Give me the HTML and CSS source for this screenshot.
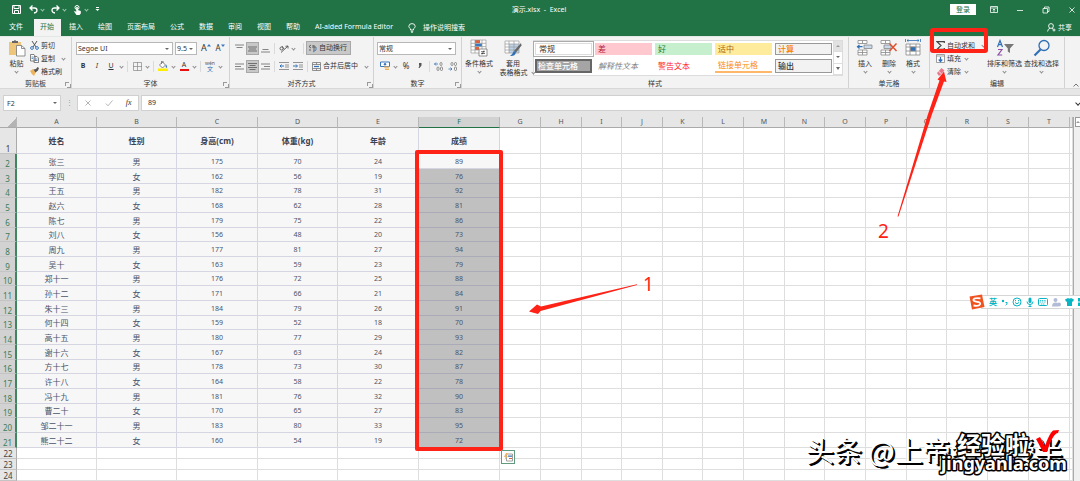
FILE: index.html
```
<!DOCTYPE html>
<html lang="zh-CN">
<head>
<meta charset="utf-8">
<title>演示.xlsx - Excel</title>
<link rel="stylesheet" href="styles.css">
</head>
<body>
<header class="titlebar">
  <div class="quick">
    <button class="qbtn" aria-label="保存"><svg width="9" height="9" viewBox="0 0 9 9" fill="none" stroke="#fff"><path d="M.5 .5h8v8h-8zM2 .5v3h5v-3M2.500 8.500v-3h4v3"/></svg></button>
    <button class="qbtn wide" aria-label="撤消"><svg width="9" height="9" viewBox="0 0 9 9" fill="none" stroke="#fff" stroke-width="1.300"><path d="M3.500 .5L1 3l2.500 2.500M1 3h4.500q2.500 0 2.500 2.300T5 8"/></svg><i class="chev"></i></button>
    <button class="qbtn wide" aria-label="恢复"><svg width="9" height="9" viewBox="0 0 9 9" fill="none" stroke="#fff" stroke-width="1.300"><path d="M5.500 .5L8 3 5.500 5.500M8 3H3.500Q1 3 1 5.300T4 8"/></svg><i class="chev"></i></button>
    <button class="qbtn wide" aria-label="触摸模式"><svg width="9" height="10" viewBox="0 0 9 10"><circle cx="4" cy="2.500" r="2" fill="none" stroke="#fff"/><path d="M3.200 2h1.600v3l3 1v2.500L6.500 10h-3L1 6.500l1-.6 1.200 1z" fill="#fff"/></svg><i class="chev"></i></button>
    <button class="qbtn" aria-label="自定义快速访问工具栏"><svg width="5" height="5" viewBox="0 0 5 5"><path d="M1 0h3v1H1zM.5 2h4l-2 2z" fill="#fff"/></svg></button>
  </div>
  <h1 class="doc">演示.xlsx&nbsp; -&nbsp; Excel</h1>
  <div class="window">
    <button class="login">登录</button>
    <button aria-label="功能区显示选项"><svg width="8" height="8" viewBox="0 0 8 8" fill="none" stroke="#fff"><path d="M.5 .5h7v6h-7zM.5 2h7M4 6V3M2.800 4.200L4 3l1.200 1.200" stroke-width=".8"/></svg></button>
    <button aria-label="最小化"><svg width="8" height="8" viewBox="0 0 8 8" stroke="#fff"><path d="M1 4.500h6" stroke-width=".8"/></svg></button>
    <button aria-label="还原"><svg width="8" height="8" viewBox="0 0 8 8" fill="none" stroke="#fff" stroke-width=".8"><path d="M1 2.500h4.500V7H1zM2.500 2.500V1H7v4.500H5.500"/></svg></button>
    <button aria-label="关闭"><svg width="8" height="8" viewBox="0 0 8 8" stroke="#fff" stroke-width=".8"><path d="M1.500 1.500l5 5M6.500 1.500l-5 5"/></svg></button>
  </div>
</header>

<nav class="tabs">
  <a href="#" class="file">文件</a>
  <a href="#" class="active">开始</a>
  <a href="#">插入</a>
  <a href="#">绘图</a>
  <a href="#">页面布局</a>
  <a href="#">公式</a>
  <a href="#">数据</a>
  <a href="#">审阅</a>
  <a href="#">视图</a>
  <a href="#">帮助</a>
  <a href="#" class="latin">AI-aided Formula Editor</a>
  <a href="#" class="tell"><svg width="8" height="10" viewBox="0 0 8 10" fill="none" stroke="#fff" stroke-width=".9"><path d="M2.500 7V5.800Q.8 4.800 .8 3.300 1 .6 4 .6t3.200 2.700Q7.200 4.800 5.500 5.800V7zM2.800 8.300h2.400M3.300 9.500h1.400"/></svg>操作说明搜索</a>
  <a href="#" class="share"><svg width="9" height="9" viewBox="0 0 9 9" fill="none" stroke="#fff" stroke-width=".9"><circle cx="4" cy="3" r="2.400"/><path d="M.6 8.500Q.8 5.800 3 5.300M5 5.300l1 .7M5.500 7h3M7 5.500v3"/></svg>共享</a>
</nav>

<section class="ribbon">
  <div class="group clip">
    <div class="body">
      <button class="big"><svg width="18" height="18" viewBox="0 0 18 18"><path d="M1 3h12v13H1z" fill="#edc67c"/><path d="M4 4V2h2q1-2 2 0h2v2z" fill="#666"/><path d="M8.500 6.500h5l3.500 3V17H8.500z" fill="#fff" stroke="#777" stroke-width=".8"/><path d="M13.500 6.500v3H17" fill="none" stroke="#777" stroke-width=".8"/></svg><span>粘贴</span><i class="chev"></i></button>
      <div class="stack">
        <button class="item"><svg width="9" height="9" viewBox="0 0 9 9" fill="none"><path d="M2 0l4 6M7 0L3 6" stroke="#555"/><circle cx="2" cy="7" r="1.400" stroke="#3b78bd"/><circle cx="7" cy="7" r="1.400" stroke="#3b78bd"/></svg>剪切</button>
        <button class="item"><svg width="9" height="9" viewBox="0 0 9 9" fill="#fff" stroke="#666" stroke-width=".8"><path d="M.5 .5H4L5 2v5H.5zM4 2.500h3l1.500 1.500v4.500H4z"/><path d="M5 5h2.500M5 6.500h2.500M1.500 3H3M1.500 4.500H3" stroke="#3b78bd"/></svg>复制<i class="chev"></i></button>
        <button class="item"><svg width="9" height="9" viewBox="0 0 9 9"><path d="M0 4l3-2 3 3-2 4q-2-1-4-5z" fill="#edb45f"/><path d="M3.500 2.500l2 3L8 3.500 9 1 7.500 0 6 2z" fill="#555"/></svg>格式刷</button>
      </div>
    </div>
    <h2>剪贴板</h2><i class="launch"></i>
  </div>

  <div class="group font">
    <div class="body rows">
      <div class="line">
        <label class="combo c97"><select aria-label="字体"><option>Segoe UI</option></select></label>
        <label class="combo c22"><select aria-label="字号"><option>9.5</option></select></label>
        <button class="tool w14 letter" aria-label="增大字号">A<svg width="4" height="8" viewBox="0 0 4 8"><path d="M0 2.500L2 0l2 2.500z" fill="#3b78bd"/></svg></button>
        <button class="tool w14 letter small" aria-label="减小字号">A<svg width="4" height="8" viewBox="0 0 4 8"><path d="M0 .5h4L2 3z" fill="#3b78bd"/></svg></button>
      </div>
      <div class="line">
        <button class="tool w14"><b>B</b></button>
        <button class="tool w14"><em>I</em></button>
        <button class="tool w14"><u>U</u></button><i class="chev c"></i>
        <span class="bar"></span>
        <button class="tool w14" aria-label="边框"><svg width="9" height="9" viewBox="0 0 9 9" fill="none" stroke="#888" stroke-width=".7"><path d="M.5 .5h8v8h-8zM4.500 0v9M0 4.500h9"/></svg></button><i class="chev c"></i>
        <span class="bar"></span>
        <button class="tool w14" aria-label="填充颜色"><svg width="10" height="10" viewBox="0 0 10 10"><path d="M1.500 4L4.500 1l3 3-3 3z" fill="#fff" stroke="#666" stroke-width=".8"/><path d="M3.500 3V0h1.500v2" fill="none" stroke="#666" stroke-width=".7"/><path d="M8 3.500q2 3 .5 3.200Q7 6.500 8 3.500" fill="#3b78bd"/><path d="M0 7.500h10v2.500H0z" fill="#ffee00"/></svg></button><i class="chev c"></i>
        <button class="tool w14 ink" aria-label="字体颜色"><span>A</span></button><i class="chev c"></i>
        <span class="bar"></span>
        <button class="tool w14" aria-label="拼音"><span class="pinyin"><small>wén</small><span>文</span></span></button><i class="chev c"></i>
      </div>
    </div>
    <h2>字体</h2><i class="launch"></i>
  </div>

  <div class="group align">
    <div class="body rows">
      <div class="line">
        <button class="tool w13" aria-label="顶端对齐"><svg width="9" height="9" viewBox="0 0 9 9" stroke="#777" stroke-width=".9"><path d="M0 1h9M1.500 3.500h6"/></svg></button>
        <button class="tool w13 on" aria-label="垂直居中"><svg width="9" height="9" viewBox="0 0 9 9" stroke="#666" stroke-width=".9"><path d="M0 3h9M1 5h7M0 7h9"/></svg></button>
        <button class="tool w13" aria-label="底端对齐"><svg width="9" height="9" viewBox="0 0 9 9" stroke="#777" stroke-width=".9"><path d="M1.500 5.500h6M0 8h9"/></svg></button>
        <span class="bar"></span>
        <button class="tool w13" aria-label="方向"><svg width="10" height="9" viewBox="0 0 10 9" fill="none" stroke="#555" stroke-width=".9"><path d="M2 8.500L9 2M9 2L6.500 2.300M9 2v2.500"/><circle cx="2.500" cy="4.500" r="1.500"/><path d="M3 2l2 3"/></svg></button><i class="chev c"></i>
        <span class="bar push"></span>
        <button class="item wrap on"><svg width="9" height="9" viewBox="0 0 9 9" fill="none" stroke="#555" stroke-width=".9"><path d="M3 1L1 2.500 3 4M1 6h2M5 1v3h2V2H5M5 6h2"/><path d="M8 3v3L5 8" stroke="#3b78bd"/></svg>自动换行</button>
      </div>
      <div class="line">
        <button class="tool w13" aria-label="左对齐"><svg width="9" height="9" viewBox="0 0 9 9" stroke="#777" stroke-width=".9"><path d="M0 2h9M0 4.500h6M0 7h9"/></svg></button>
        <button class="tool w13 on" aria-label="居中"><svg width="9" height="9" viewBox="0 0 9 9" stroke="#666" stroke-width=".9"><path d="M0 1.500h9M1.500 3.500h6M0 5.500h9M1.500 7.500h6"/></svg></button>
        <button class="tool w13" aria-label="右对齐"><svg width="9" height="9" viewBox="0 0 9 9" stroke="#777" stroke-width=".9"><path d="M0 2h9M3 4.500h6M0 7h9"/></svg></button>
        <span class="bar"></span>
        <button class="tool w14" aria-label="减少缩进"><svg width="10" height="8" viewBox="0 0 10 8" fill="none"><path d="M0 .5h10M6 3h4M6 5h4M0 7.500h10" stroke="#888" stroke-width=".9"/><path d="M5 4H1M2.500 2.500L1 4l1.500 1.500" stroke="#2f6fb5"/></svg></button>
        <button class="tool w14" aria-label="增加缩进"><svg width="10" height="8" viewBox="0 0 10 8" fill="none"><path d="M0 .5h10M6 3h4M6 5h4M0 7.500h10" stroke="#888" stroke-width=".9"/><path d="M0 4h4M3 2.500L4.500 4 3 5.500" stroke="#2f6fb5"/></svg></button>
        <span class="bar"></span>
        <button class="item wrap"><svg width="9" height="9" viewBox="0 0 9 9" fill="none" stroke="#777" stroke-width=".8"><path d="M.5 .5h8v8h-8zM.5 2.500h8M.5 6.500h8M4.500 .5v2M4.500 6.500v2"/><path d="M2 4.500h5" stroke="#2f6fb5" stroke-width="1.200"/></svg>合并后居中<i class="chev"></i></button>
      </div>
    </div>
    <h2>对齐方式</h2><i class="launch"></i>
  </div>

  <div class="group number">
    <div class="body rows">
      <div class="line"><label class="combo c79"><select aria-label="数字格式"><option>常规</option></select></label></div>
      <div class="line">
        <button class="tool w14" aria-label="会计数字格式"><svg width="10" height="10" viewBox="0 0 10 10"><path d="M.5 1h9v4.500h-9z" fill="#fff" stroke="#3b78bd"/><circle cx="5" cy="3.200" r="1.200" fill="#3b78bd"/><path d="M4 5.500h5v1.200H4zM5 7.500h4v1.500H5z" fill="#edb45f"/></svg></button><i class="chev c"></i>
        <button class="tool w14 pct">%</button>
        <button class="tool w14 comma" aria-label="千位分隔样式"><svg width="4" height="6" viewBox="0 0 4 6"><path d="M1 0h2.500v2.500L1.500 5H.5L1.500 2.500H1z" fill="#555"/></svg></button>
        <span class="bar"></span>
        <button class="tool w14" aria-label="增加小数位数"><svg width="10" height="9" viewBox="0 0 10 9" fill="none" stroke="#777" stroke-width=".8"><path d="M4 2H.5M2 .5L.5 2 2 3.500" stroke="#2f6fb5"/><rect x="6" y=".5" width="2" height="3" rx="1"/><rect x="3" y="5" width="2" height="3.500" rx="1"/><rect x="6.500" y="5" width="2" height="3.500" rx="1"/></svg></button>
        <button class="tool w14" aria-label="减少小数位数"><svg width="10" height="9" viewBox="0 0 10 9" fill="none" stroke="#777" stroke-width=".8"><path d="M.5 7H4M2.500 5.500L4 7 2.500 8.500" stroke="#2f6fb5"/><rect x="6.500" y="5" width="2" height="3.500" rx="1"/><rect x="3" y=".5" width="2" height="3" rx="1"/><rect x="6.500" y=".5" width="2" height="3" rx="1"/></svg></button>
      </div>
    </div>
    <h2>数字</h2><i class="launch"></i>
  </div>

  <div class="group styles">
    <div class="body">
      <button class="big w34"><svg width="18" height="18" viewBox="0 0 18 18"><path d="M1 1h15v13H1z" fill="#fff"/><path d="M5 1h5v3H5zM5 8h4v3H5z" fill="#e0603c"/><path d="M5 4.500h7v3H5z" fill="#3b78bd"/><path d="M1 1h15v13H1zM1 4.300h15M1 7.600h15M1 11h15M5 1v13M12 1v13" fill="none" stroke="#999" stroke-width=".7"/><path d="M9 10h8v7H9z" fill="#fff" stroke="#777" stroke-width=".8"/><path d="M11 12.700h4M11 14.500h4M14 11.500l-2 4" stroke="#333" stroke-width=".7"/></svg><span>条件格式</span><i class="chev"></i></button>
      <button class="big w34"><svg width="18" height="18" viewBox="0 0 18 18"><path d="M1 2h14v12H1z" fill="#fff"/><path d="M5 5h10v9H5z" fill="#bcd3ea"/><path d="M1 2h14v12H1zM1 5h14M1 8h14M1 11h14M5 2v12M10 2v12" fill="none" stroke="#999" stroke-width=".7"/><path d="M17 4l-7 8 2 1.500 5.500-7z" fill="#666"/><path d="M10 12l2 1.500q-1 4-6 3.500 2-1 4-5z" fill="#2f6fb5"/></svg><span>套用</span><span class="two">表格格式<i class="chev"></i></span></button>
      <div class="gallery">
        <div class="swatches">
          <button class="sw normal">常规</button><button class="sw bad">差</button><button class="sw good">好</button><button class="sw neutral">适中</button><button class="sw calc">计算</button>
          <button class="sw check">检查单元格</button><button class="sw explain">解释性文本</button><button class="sw warn">警告文本</button><button class="sw link">链接单元格</button><button class="sw out">输出</button>
        </div>
        <div class="spin"><button aria-label="上一行"><i class="tri up"></i></button><button aria-label="下一行"><i class="tri"></i></button><button aria-label="其他"><i class="tri more"></i></button></div>
      </div>
    </div>
    <h2>样式</h2>
  </div>

  <div class="group cells">
    <div class="body">
      <button class="big w24"><svg width="18" height="18" viewBox="0 0 18 18" fill="#fff" stroke="#888" stroke-width=".8"><path d="M2 1.500h9v3H2zM6.500 1.500v3M2 11h9v5H2zM6.500 11v5M2 13.500h9"/><path d="M8 6h8v3.500H8z" fill="#c9d9ea"/><path d="M6.500 7.700H1.500M3.500 6L1.500 7.700l2 1.800" fill="none" stroke="#2f6fb5" stroke-width="1.200"/></svg><span>插入</span><i class="chev"></i></button>
      <button class="big w24"><svg width="18" height="18" viewBox="0 0 18 18" fill="#fff" stroke="#888" stroke-width=".8"><path d="M1 1.500h9v3H1zM5.500 1.500v3M1 11h9v5H1zM5.500 11v5M1 13.500h9"/><path d="M4 6h7v3.500H4z" fill="#c9d9ea"/><path d="M9.500 4.500l7 7.500M16.500 4.500l-7 7.500" stroke="#e0502c" stroke-width="1.500"/></svg><span>删除</span><i class="chev"></i></button>
      <button class="big w24"><svg width="18" height="18" viewBox="0 0 18 18" fill="#fff" stroke="#888" stroke-width=".8"><path d="M2 5h14v11H2zM2 8h14M2 12h14M6 5v11M12 5v11"/><path d="M6.500 8h5v4h-5z" fill="#2f6fb5"/><path d="M3 1.500h12M4.500 .3L3 1.500l1.500 1.200M13.500 .3L15 1.500l-1.500 1.200M1.500 0v3M16.500 0v3" stroke="#2f6fb5" fill="none"/></svg><span>格式</span><i class="chev"></i></button>
    </div>
    <h2>单元格</h2>
  </div>

  <div class="group edit">
    <div class="body">
      <div class="stack">
        <button class="item sum"><svg width="9" height="9" viewBox="0 0 9 9" fill="none" stroke="#444" stroke-width="1.200"><path d="M8.300 2V.7H1L5 4.500 1 8.300h7.300V7"/></svg>自动求和<i class="chev"></i></button>
        <button class="item"><svg width="9" height="9" viewBox="0 0 9 9" fill="#fff" stroke="#888" stroke-width=".8"><path d="M.5 .5h8v8h-8zM.5 2h8"/><path d="M4.500 3v4.500M2.700 5.500l1.800 2 1.800-2" fill="none" stroke="#2f6fb5" stroke-width="1.200"/></svg>填充<i class="chev near"></i></button>
        <button class="item"><svg width="9" height="9" viewBox="0 0 9 9"><path d="M1 6l4.500-5L8.500 3.500 4 8.500H2.500z" fill="#e8788c"/><path d="M2.500 4.200l3 2.700" stroke="#fff" stroke-width=".8"/></svg>清除<i class="chev near"></i></button>
      </div>
      <button class="big w37"><svg width="18" height="18" viewBox="0 0 18 18"><path d="M1.500 8L4 1.500 6.500 8M2.500 5.700h3" fill="none" stroke="#2f6fb5" stroke-width="1.200"/><path d="M2 10.500h4L2 16h4.200" fill="none" stroke="#8d4fa8" stroke-width="1.200"/><path d="M8 5h10l-4 4.500V14l-2.200-1.500v-3z" fill="#777"/></svg><span>排序和筛选</span><i class="chev"></i></button>
      <button class="big w37"><svg width="18" height="18" viewBox="0 0 18 18" fill="none" stroke="#2f6fb5"><circle cx="11" cy="6.500" r="5" stroke-width="1.300"/><path d="M7.500 10.500L1.500 16.500" stroke-width="2.200"/></svg><span>查找和选择</span><i class="chev"></i></button>
    </div>
    <h2>编辑</h2>
  </div>
  <button class="collapse" aria-label="折叠功能区"><svg width="6" height="4" viewBox="0 0 6 4" fill="none" stroke="#666" stroke-width=".9"><path d="M.5 3.500L3 1l2.500 2.500"/></svg></button>
</section>

<section class="formula">
  <label class="combo name"><input aria-label="名称框" value="F2"></label>
  <span class="dots">⋮</span>
  <div class="fx">
    <button aria-label="取消"><svg width="8" height="8" viewBox="0 0 8 8" stroke="#b5b5b5"><path d="M1.500 1.500l5 5M6.500 1.500l-5 5"/></svg></button>
    <button aria-label="输入"><svg width="8" height="8" viewBox="0 0 8 8" fill="none" stroke="#b5b5b5"><path d="M.8 4.500L3 6.800 7.500 1.500"/></svg></button>
    <button class="fn"><em>fx</em></button>
  </div>
  <label class="entry"><input aria-label="编辑栏" value="89"><i class="chev dark"></i></label>
</section>

<main class="sheet">
  <table class="grid" id="grid"></table>
  <div class="vscroll"><button aria-label="向上滚动"><i class="tri up"></i></button></div>
  <div class="frame"></div>
  <button class="quickfmt" aria-label="快速分析"><svg width="9" height="9" viewBox="0 0 9 9"><path d="M2.500 1h6v7h-6z" fill="#fff" stroke="#888" stroke-width=".8"/><path d="M4 2.500h4v1.300H4z" fill="#3b78bd"/><path d="M5 5h3v1H5z" fill="#e0603c"/><path d="M2 0L0 4h1.500L.5 7 4 3H2.500L3.500 0z" fill="#edb45f"/></svg></button>
</main>

<svg class="notes" width="1080" height="481" viewBox="0 0 1080 481">
  <rect x="932" y="30" width="54" height="21" rx="1" fill="none" stroke="#ff2216" stroke-width="4"/>
  <path d="M897.500 216.500L927.700 115 939.500 80.500 937.500 79.500 944 71.500 946.500 82 944 81.500 931.700 115 898.500 216.500z" fill="#ff2216"/>
  <path d="M637 284.200L541 306.500 537 304.500 529 311.500 538 314 540.500 311 637 285z" fill="#ff2216"/>
  <text x="643" y="291" class="mark">1</text>
  <text x="878" y="238" class="mark">2</text>
</svg>

<div class="ime">
  <svg class="sogou" width="16" height="16" viewBox="0 0 16 16"><path d="M.5 2.500L13 .5l2.500 12.500L3 15.500z" fill="#f0531f"/><path d="M11.500 4.300Q5 3.500 4.500 5.500T8 7.800t3 2.500-6.500 1.200" fill="none" stroke="#fff" stroke-width="1.800"/></svg>
  <b>英</b>
  <svg width="7" height="8" viewBox="0 0 7 8"><circle cx="2" cy="3" r="1.200" fill="#08b5c4"/><path d="M4.500 4.500h1.700q0 2-1.500 2.800" fill="none" stroke="#08b5c4"/></svg>
  <svg width="10" height="10" viewBox="0 0 10 10" fill="none" stroke="#08b5c4"><circle cx="5" cy="5" r="4"/><path d="M3 5.500q2 2.500 4 0M3.500 3v1.200M6.500 3v1.200"/></svg>
  <svg width="8" height="10" viewBox="0 0 8 10"><rect x="2.500" y=".5" width="3" height="5.500" rx="1.500" fill="#08b5c4"/><path d="M1 4.500Q1 7.500 4 7.500t3-3M4 7.500V9.500M2.500 9.500h3" fill="none" stroke="#08b5c4"/></svg>
  <svg width="10" height="8" viewBox="0 0 10 8"><rect x=".5" y=".5" width="9" height="7" rx="1" fill="#fff" stroke="#08b5c4"/><path d="M2 2.500h6M2 4h6M3 6h4" stroke="#08b5c4" stroke-width=".8" stroke-dasharray="1.200 .6"/></svg>
  <svg width="9" height="9" viewBox="0 0 9 9" fill="#b3bcd4"><circle cx="3.500" cy="2" r="2"/><path d="M0 8.500q0-4 3.500-4 2 0 2.500 1v3z"/><circle cx="7" cy="6.500" r="2"/></svg>
  <svg width="9" height="8" viewBox="0 0 9 8"><path d="M3 0q1.500 1.200 3 0l3 1.500-1 2.300-1-.3V8H2V3.500l-1 .3L0 1.500z" fill="#08b5c4"/></svg>
  <svg width="8" height="8" viewBox="0 0 8 8" fill="#08b5c4"><path d="M0 0h3.500v3.500H0zM4.500 0H8v3.500H4.500zM0 4.500h3.500V8H0zM4.500 4.500H8V8H4.500z"/></svg>
</div>

<div class="credit">头条 @上帝给的授半</div>
<svg class="brand" width="130" height="56" viewBox="0 0 130 56">
  <text x="19" y="27" class="cn">经验啦</text>
  <text x="3" y="43" class="en">jingyanla.com</text>
  <path d="M98 12l4-2 5 9Q111 7 115 3.500L121 3l-1 3q-5 0-11 19h-4z" fill="#f00"/>
</svg>
<script src="app.js"></script>
</body>
</html>
```
FILE: styles.css
```
* { box-sizing: border-box; }
body {
  margin: 0;
  height: 100vh;
  display: flex;
  flex-direction: column;
  position: relative;
  overflow: hidden;
  background: #e6e6e6;
  color: #333;
  font: 7px/10px "Noto Sans", "Noto Sans CJK SC", sans-serif;
}
button, input, select { font: inherit; color: inherit; margin: 0; padding: 0; border: 0; background: none; border-radius: 0; outline: 0; }
button { display: flex; align-items: center; justify-content: center; white-space: nowrap; }
svg { flex: none; display: block; }
h1, h2 { margin: 0; font: inherit; }
a { color: inherit; text-decoration: none; }

.chev { flex: none; width: 3px; height: 3px; border: solid #8c8c8c; border-width: 0 1px 1px 0; transform: rotate(45deg); }
.chev.c { margin: 0 2px; }
.chev.dark { border-color: #333; width: 4px; height: 4px; }
.tri { width: 0; height: 0; border: 2px solid transparent; border-top-color: #666; border-bottom-width: 0; }
.tri.up { border-width: 0 2px 2px; border-bottom-color: #999; }
.tri.more { border-top-width: 3px; }

.titlebar { flex: none; height: 19px; display: flex; align-items: center; background: #217346; color: #fff; }
.quick { display: flex; align-items: center; gap: 8px; padding-left: 12px; }
.quick .chev { border-color: #a5c8b4; }
.qbtn { gap: 3px; }
.qbtn.wide { width: 14px; justify-content: flex-start; }
.doc { flex: 1; text-align: center; padding-left: 28px; }
.window { display: flex; align-items: center; margin-right: -5px; }
.window button { width: 26px; }
.window .login { background: #fff; color: #217346; height: 11px; margin-right: 5px; }

.tabs { flex: none; height: 17px; display: flex; align-items: stretch; background: #217346; color: #fff; line-height: 16px; }
.tabs a { padding: 0 8px 0 7px; white-space: nowrap; }
.tabs .file { margin: 0 3px 0 2px; }
.tabs .active { background: #f3f3f3; color: #217346; padding: 0 7px 0 6px; margin-right: 1px; }
.tabs .tell, .tabs .share { display: flex; align-items: center; gap: 7px; }
.tabs .share { margin-left: auto; gap: 2px; }

.ribbon { flex: none; height: 53px; display: flex; background: #f3f3f3; border-top: 1px solid #e2e8e4; border-bottom: 1px solid #d8d8d8; }
.group { flex: none; display: flex; flex-direction: column; position: relative; border-right: 1px solid #d2d2d2; }
.group .body { flex: 1; display: flex; padding-top: 2px; }
.group .rows { flex-direction: column; gap: 4px; padding-top: 4px; }
.group h2 { text-align: center; height: 9px; line-height: 9px; }
.clip { width: 72px; }
.font { width: 158px; }
.align { width: 144px; }
.number { width: 88px; }
.group.styles { flex: 1; min-width: 0; }
.cells { width: 81px; }
.edit { width: 135px; }
.launch { position: absolute; right: 2px; bottom: 2px; width: 4px; height: 4px; border: solid #999; border-width: 1px 0 0 1px; }
.launch::after { content: ""; position: absolute; left: 1px; top: 1px; width: 3px; height: 3px; border: solid #999; border-width: 0 1px 1px 0; }
.collapse { flex: none; width: 15px; justify-content: flex-end; align-self: flex-end; padding: 0 1px 1px 0; }

.big { flex: none; flex-direction: column; justify-content: flex-start; line-height: 9px; }
.big svg { margin-bottom: 2px; }
.big .chev { margin-top: 2px; }
.big .two { display: flex; align-items: center; gap: 4px; padding-left: 8px; }
.big .two .chev { margin: 0; }
.clip .big { width: 30px; padding-left: 3px; }
.w34 { width: 34px; }
.w24 { width: 24px; }
.w37 { width: 37px; }
.stack { display: flex; flex-direction: column; }
.item { height: 13px; gap: 2px; justify-content: flex-start; }
.item .chev { margin-left: 5px; }
.item .chev.near { margin-left: 2px; }
.line { display: flex; align-items: center; height: 14px; }
.font .line, .number .line { padding-left: 4px; }
.number .line:first-child { padding-left: 3px; }
.align .line { padding-left: 3px; }

.combo { display: flex; position: relative; height: 13px; background: #fff; border: 1px solid #b8b8b8; margin-right: 2px; }
.combo select, .combo input { appearance: none; width: 100%; min-width: 0; padding: 0 1px; font-size: 7px; line-height: 11px; }
.combo::after { content: ""; position: absolute; right: 3px; top: 5px; border: 2px solid transparent; border-top-color: #666; border-bottom: 0; }
.c97 { width: 97px; }
.c22 { width: 22px; }
.c79 { width: 79px; }
.tool { flex: none; height: 13px; font-size: 7px; }
.w14 { width: 14px; }
.w13 { width: 13px; }
.letter { font-size: 9px; }
.letter.small { font-size: 8px; }
.on { background: #c8c8c8; outline: 1px solid #a8a8a8; outline-offset: -1px; }
.bar { flex: none; width: 1px; height: 11px; background: #dadada; margin: 0 2px; }
.bar.push { margin-left: 6px; }
.ink span { border-bottom: 2px solid #e8110f; width: 9px; line-height: 8px; }
.pinyin { display: flex; flex-direction: column; line-height: 7px; font-size: 6px; color: #2f6fb5; }
.pinyin small { font-size: 5px; line-height: 6px; color: #555; }
.pct { font-size: 8px; }
.wrap { height: 14px; padding: 0 4px 0 2px; }

.gallery { flex: 1; min-width: 0; display: flex; height: 36px; margin: 1px 5px 0 3px; background: #fff; border: 1px solid #dcdcdc; }
.swatches { flex: 1; min-width: 0; display: grid; grid-template-columns: repeat(5, 1fr); gap: 4px 3px; padding: 2px 1px 3px; }
.sw { font-size: 8px; justify-content: flex-start; padding-left: 3px; min-width: 0; }
.sw.normal { outline: 1px solid #ababab; outline-offset: 1px; border: 1px solid #ddd; }
.sw.bad { background: #ffc7ce; color: #b0203a; }
.sw.good { background: #c6efce; color: #1f7d35; }
.sw.neutral { background: #ffeb9c; color: #a86510; }
.sw.calc { background: #f2f2f2; color: #fa7d00; border: 1px solid #999; font-weight: 500; padding-left: 2px; }
.sw.check { background: #a5a5a5; color: #fff; border: 2px solid #666; font-weight: 500; padding-left: 1px; }
.sw.explain { color: #7f7f7f; font-style: italic; }
.sw.warn { color: #f22; }
.sw.link { color: #fa8d20; border-bottom: 2px solid #ffb869; }
.sw.out { background: #f2f2f2; border: 1px solid #999; font-weight: 500; padding-left: 2px; }
.spin { width: 9px; display: flex; flex-direction: column; border-left: 1px solid #ddd; }
.spin button { flex: 1; border-bottom: 1px solid #ddd; }
.spin button:first-child { background: #e2e2e2; }
.cells .body { padding-left: 4px; }
.edit .stack { width: 56px; padding-left: 6px; }

.formula { flex: none; display: flex; height: 28px; padding: 6px 0 6px 3px; }
.formula .combo { width: 58px; height: 16px; margin: 0; border-color: #d0d0d0; }
.formula .combo input { padding-left: 3px; }
.formula .combo::after { top: 6px; }
.dots { width: 16px; text-align: center; line-height: 15px; color: #999; }
.fx { width: 62px; display: flex; background: #fff; border: 1px solid #d0d0d0; justify-content: space-around; }
.fn { font: 8px/10px "Liberation Serif", serif; }
.entry { flex: 1; display: flex; align-items: center; margin-left: 2px; background: #fff; border: 1px solid #d0d0d0; border-right: 0; overflow: hidden; }
.entry input { flex: 1; padding-left: 6px; }

.sheet { flex: 1; min-height: 0; display: flex; align-items: flex-start; position: relative; overflow: hidden; background: #e6e6e6; }
.grid { flex: 1; min-width: 0; width: 100%; table-layout: fixed; border-collapse: separate; border-spacing: 0; background: #fff; }
.grid td, .grid th { padding: 0; border-right: 1px solid #dedede; border-bottom: 1px solid #dedede; text-align: center; font-weight: normal; line-height: 9px; overflow: hidden; white-space: nowrap; }
.grid thead th { height: 11px; background: #e6e6e6; border-right-color: #b8b8b8; border-bottom-color: #aaa; color: #555; font-size: 7px; line-height: 10px; }
.grid thead .sel { background: #d2d2d2; color: #217346; border-bottom-color: #217346; }
.grid thead .corner { background: linear-gradient(135deg, #e6e6e6 66%, #b4b4b4 66%); }
.grid tbody th { background: #e6e6e6; border-right-color: #aaa; border-bottom-color: #c4c4c4; color: #444; font-size: 8px; vertical-align: bottom; }
.grid .title { height: 26px; }
.grid .record { height: 15px; }
.grid .short { height: 14px; }
.grid .blank { height: 11px; }
.grid .record th, .grid .short th { background: #d2d2d2; color: #3c7d58; border-right: 2px solid #3f8560; }
.grid .data { background: #f7f7f8; border-color: #d6d6e3; color: #4a5468; font-size: 7px; }
.grid .data.zh { font-size: 8px; }
.grid .title .data { font-size: 8px; font-weight: bold; color: #3a4252; }
.grid .picked { background: #c0c0c0; border-color: #ababb8; }
.vscroll { flex: none; width: 7px; align-self: stretch; border-left: 1px solid #aaa; background: #f0f0f0; }
.vscroll button { width: 6px; height: 10px; margin-left: 1px; background: #fff; border: 1px solid #999; }
.frame { position: absolute; left: 415px; top: 33px; width: 88px; height: 301px; border: 4px solid #ff2216; border-radius: 2px; }
.quickfmt { position: absolute; left: 501px; top: 333px; width: 14px; height: 14px; background: #fff; border: 1px solid #5f9b7c; }

.notes { position: absolute; left: 0; top: 0; pointer-events: none; }
.mark { font: 19px "Noto Sans", sans-serif; fill: #ff2216; }
.ime { position: absolute; right: 0; top: 295px; width: 99px; height: 14px; display: flex; align-items: center; gap: 4px; padding-left: 7px; background: #fff; border: 1px solid #d6d6d6; border-right: 0; color: #08b5c4; font-size: 8px; }
.sogou { margin-left: -20px; }
.credit { position: absolute; left: 806px; top: 430px; font: 28px/40px "Noto Sans CJK SC", sans-serif; color: #fff; text-shadow: 1px 1px 0 #000, 2px 2px 0 #000; white-space: nowrap; }
.brand { position: absolute; left: 938px; top: 427px; }
.brand text { fill: #fff; stroke: #000; stroke-width: 3px; paint-order: stroke; stroke-linejoin: round; }
.cn { font: bold 24px "Noto Sans CJK SC", sans-serif; }
.en { font: bold 18px "Noto Sans", sans-serif; }
```
FILE: app.js
```
const widths = [17, 80, 80, 81, 80, 81, 81, 41, 41, 40, 41, 40, 41, 41, 40, 41, 41, 40, 41, 41, 41];
const letters = "ABCDEFGHIJKLMNOPQRST".split("");
const titles = ["姓名", "性别", "身高(cm)", "体重(kg)", "年龄", "成绩"];
const people = [
  ["张三", "男", 175, 70, 24, 89], ["李四", "女", 162, 56, 19, 76],
  ["王五", "男", 182, 78, 31, 92], ["赵六", "女", 168, 62, 28, 81],
  ["陈七", "男", 179, 75, 22, 86], ["刘八", "女", 156, 48, 20, 73],
  ["周九", "男", 177, 81, 27, 94], ["吴十", "女", 163, 59, 23, 79],
  ["郑十一", "男", 176, 72, 25, 88], ["孙十二", "女", 171, 66, 21, 84],
  ["朱十三", "男", 184, 79, 26, 91], ["何十四", "女", 159, 52, 18, 70],
  ["高十五", "男", 180, 77, 29, 93], ["谢十六", "女", 167, 63, 24, 82],
  ["方十七", "男", 178, 73, 30, 87], ["许十八", "女", 164, 58, 22, 78],
  ["冯十九", "男", 181, 76, 32, 90], ["曹二十", "女", 170, 65, 27, 83],
  ["邹二十一", "男", 183, 80, 33, 95], ["熊二十二", "女", 160, 54, 19, 72]
];

const blanks = n => "<td></td>".repeat(n);
const cols = widths.map(w => `<col style="width:${w}px">`).join("") + "<col>";
const head = '<th class="corner"></th>' +
  letters.map(l => `<th${l === "F" ? ' class="sel"' : ""}>${l}</th>`).join("") + "<th></th>";

let body = `<tr class="title"><th>1</th>${titles.map(t => `<td class="data">${t}</td>`).join("")}${blanks(15)}</tr>`;
people.forEach((person, r) => {
  const cells = person.map((value, c) => {
    const picked = c === 5 && r > 0 ? " picked" : "";
    return `<td class="data${c < 2 ? " zh" : ""}${picked}">${value}</td>`;
  }).join("");
  body += `<tr class="${r % 3 === 2 ? "short" : "record"}"><th>${r + 2}</th>${cells}${blanks(15)}</tr>`;
});
for (let n = 22; n <= 24; n++) body += `<tr class="blank"><th>${n}</th>${blanks(21)}</tr>`;

document.getElementById("grid").innerHTML =
  `<colgroup>${cols}</colgroup><thead><tr>${head}</tr></thead><tbody>${body}</tbody>`;
```
